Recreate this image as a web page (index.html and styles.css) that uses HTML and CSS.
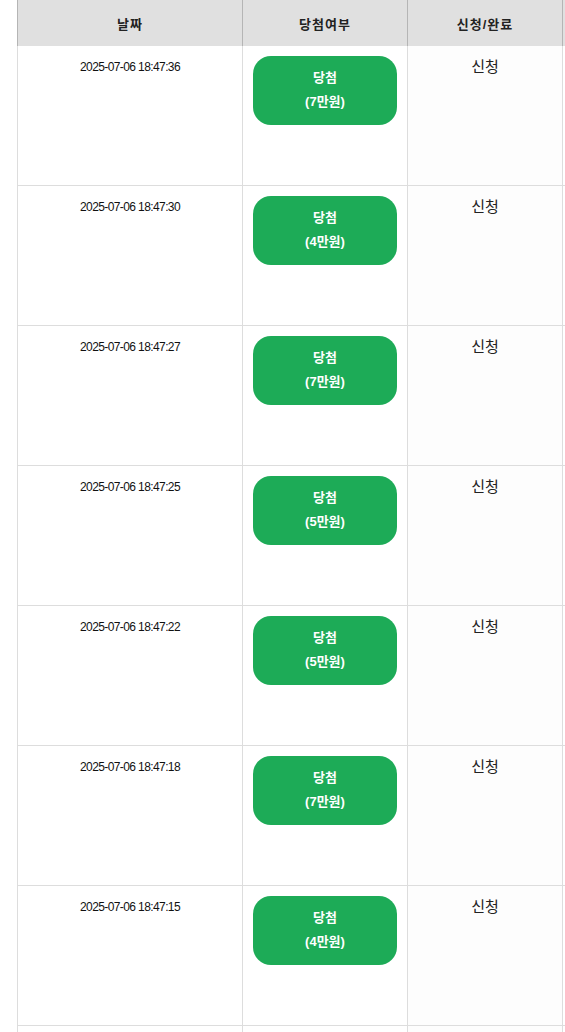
FILE: index.html
```html
<!DOCTYPE html>
<html lang="ko">
<head>
  <meta charset="UTF-8">
  <meta name="viewport" content="width=device-width, initial-scale=1.0">
  <title>당첨 내역</title>
  <link rel="stylesheet" href="styles.css">
</head>
<body>
  <div class="table-wrap">
    <table class="history">
      <colgroup>
        <col class="col-date">
        <col class="col-result">
        <col class="col-status">
        <col class="col-extra">
      </colgroup>
      <thead>
        <tr>
          <th>날짜</th>
          <th>당첨여부</th>
          <th>신청/완료</th>
          <th></th>
        </tr>
      </thead>
      <tbody>
        <tr>
          <td><div class="date">2025-07-06 18:47:36</div></td>
          <td><div class="win">당첨<br>(7만원)</div></td>
          <td><div class="status">신청</div></td>
          <td></td>
        </tr>
        <tr>
          <td><div class="date">2025-07-06 18:47:30</div></td>
          <td><div class="win">당첨<br>(4만원)</div></td>
          <td><div class="status">신청</div></td>
          <td></td>
        </tr>
        <tr>
          <td><div class="date">2025-07-06 18:47:27</div></td>
          <td><div class="win">당첨<br>(7만원)</div></td>
          <td><div class="status">신청</div></td>
          <td></td>
        </tr>
        <tr>
          <td><div class="date">2025-07-06 18:47:25</div></td>
          <td><div class="win">당첨<br>(5만원)</div></td>
          <td><div class="status">신청</div></td>
          <td></td>
        </tr>
        <tr>
          <td><div class="date">2025-07-06 18:47:22</div></td>
          <td><div class="win">당첨<br>(5만원)</div></td>
          <td><div class="status">신청</div></td>
          <td></td>
        </tr>
        <tr>
          <td><div class="date">2025-07-06 18:47:18</div></td>
          <td><div class="win">당첨<br>(7만원)</div></td>
          <td><div class="status">신청</div></td>
          <td></td>
        </tr>
        <tr>
          <td><div class="date">2025-07-06 18:47:15</div></td>
          <td><div class="win">당첨<br>(4만원)</div></td>
          <td><div class="status">신청</div></td>
          <td></td>
        </tr>
        <tr class="row-tail">
          <td></td>
          <td></td>
          <td></td>
          <td></td>
        </tr>
      </tbody>
    </table>
  </div>
</body>
</html>
```

FILE: styles.css
```css
body {
  margin: 0;
  padding: 0;
  background: #fff;
  font-family: "Liberation Sans", "Noto Sans CJK KR", sans-serif;
  color: #111;
  overflow: hidden;
}
.table-wrap {
  margin-left: 17px;
  width: 548px;
  height: 1032px;
  overflow: hidden;
}
.history {
  border-collapse: collapse;
  table-layout: fixed;
  width: 646px;
}
.col-date { width: 225px; }
.col-result { width: 165px; }
.col-status { width: 155px; }
.col-extra { width: 101px; }
.history th {
  height: 46px;
  padding: 0;
  background: #e0e0e0;
  border-left: 1px solid #b5b5b5;
  border-right: 1px solid #b5b5b5;
  font-size: 13px;
  font-weight: bold;
  letter-spacing: 1px;
  color: #222;
  text-align: center;
  vertical-align: middle;
}
.history td {
  height: 119px;
  padding: 10px;
  border: 1px solid #ddd;
  border-top: none;
  text-align: center;
  vertical-align: top;
}
.history td:nth-child(3) {
  background: #fdfdfd;
}
.date {
  padding-top: 3px;
  font-size: 12px;
  line-height: 16px;
  letter-spacing: -0.6px;
  color: #111;
}
.win {
  width: 144px;
  margin: 0 auto;
  padding: 10px 0 11px;
  background: #1dab57;
  border-radius: 18px;
  color: #fff;
  font-size: 13px;
  font-weight: bold;
  line-height: 24px;
}
.status {
  padding-top: 1px;
  font-size: 15px;
  line-height: 20px;
  color: #222;
}
```
